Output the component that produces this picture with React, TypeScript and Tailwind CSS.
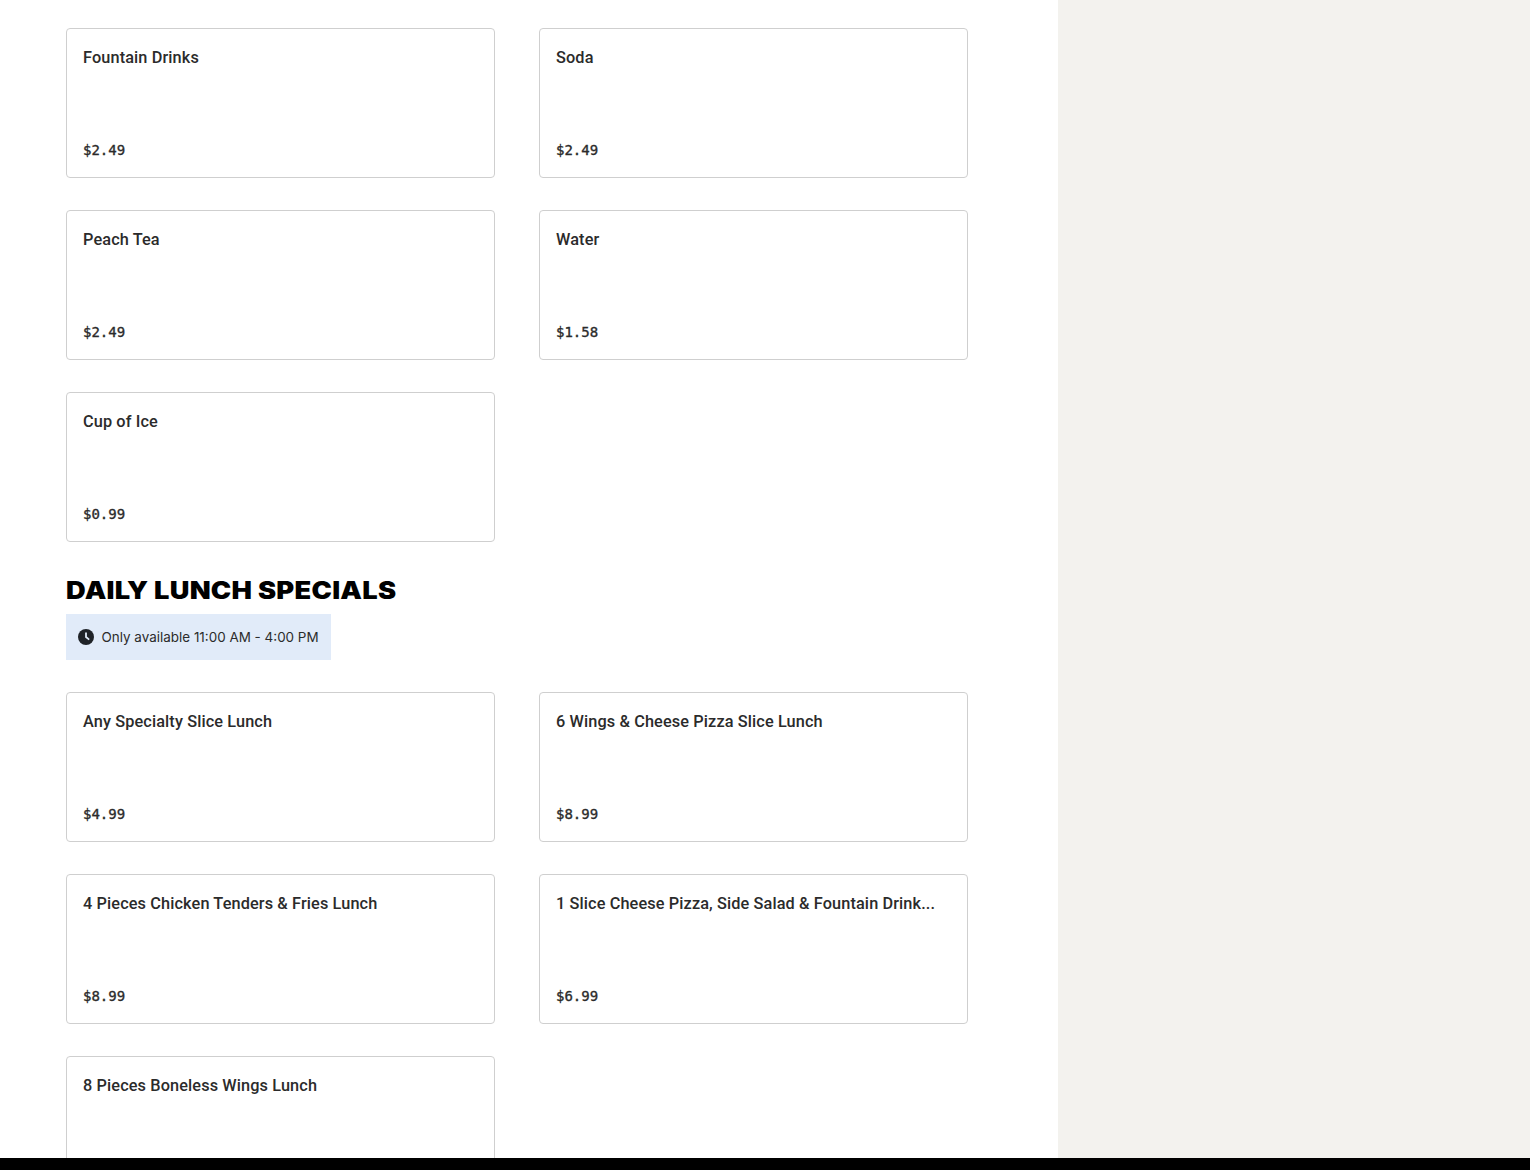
type Item = { name: string; price?: string };

const drinks: Item[] = [
  { name: "Fountain Drinks", price: "$2.49" },
  { name: "Soda", price: "$2.49" },
  { name: "Peach Tea", price: "$2.49" },
  { name: "Water", price: "$1.58" },
  { name: "Cup of Ice", price: "$0.99" },
];

const lunch: Item[] = [
  { name: "Any Specialty Slice Lunch", price: "$4.99" },
  { name: "6 Wings & Cheese Pizza Slice Lunch", price: "$8.99" },
  { name: "4 Pieces Chicken Tenders & Fries Lunch", price: "$8.99" },
  { name: "1 Slice Cheese Pizza, Side Salad & Fountain Drink...", price: "$6.99" },
  { name: "8 Pieces Boneless Wings Lunch" },
];

function Card({ item }: { item: Item }) {
  return (
    <div className="flex h-[150px] flex-col justify-between rounded-[4px] border border-[#cfcfcf] bg-white px-4 pt-[18px] pb-[17px]">
      <div className="whitespace-nowrap font-['Roboto',sans-serif] text-[16.3px] leading-[22px] font-medium tracking-[0.12px] text-[#2b2b2b]">
        {item.name}
      </div>
      {item.price && (
        <div className="font-['DejaVu_Sans_Mono',monospace] text-[14px] leading-[20px] text-[#2b2b2b] [-webkit-text-stroke:0.35px_#2b2b2b]">
          {item.price}
        </div>
      )}
    </div>
  );
}

function Grid({ items }: { items: Item[] }) {
  return (
    <div className="grid grid-cols-[429px_429px] gap-x-[44px] gap-y-[32px]">
      {items.map((i) => (
        <Card key={i.name} item={i} />
      ))}
    </div>
  );
}

export default function App() {
  return (
    <div className="flex h-[1170px] flex-col overflow-hidden bg-white">
      <div className="flex min-h-0 flex-1">
        <main className="w-[1058px] overflow-hidden pl-[66px] pt-[28px]">
          <Grid items={drinks} />
          <h2 className="mt-[33px] mb-[-1px] origin-left scale-x-[1.135] whitespace-nowrap font-['Inter',sans-serif] text-[24px] leading-[32px] font-black tracking-[0.25px] text-black">
            DAILY LUNCH SPECIALS
          </h2>
          <div className="mt-[8px] mb-[32px] flex h-[46px] w-[265px] items-center gap-[7.5px] bg-[#e1ebf9] pl-[12px]">
            <svg width="16" height="16" viewBox="0 0 16 16" className="shrink-0">
              <circle cx="8" cy="8" r="8" fill="#1f2328" />
              <path d="M8 3.4V8l3.2 2.6" fill="none" stroke="#e1ebf9" strokeWidth="1.8" />
            </svg>
            <span className="font-['Inter',sans-serif] text-[13.45px] leading-[20px] text-[#2b2b2b]">
              Only available 11:00 AM - 4:00 PM
            </span>
          </div>
          <Grid items={lunch} />
        </main>
        <aside className="flex-1 bg-[#f3f2ee]" />
      </div>
      <div className="h-[12px] shrink-0 bg-black" />
    </div>
  );
}
